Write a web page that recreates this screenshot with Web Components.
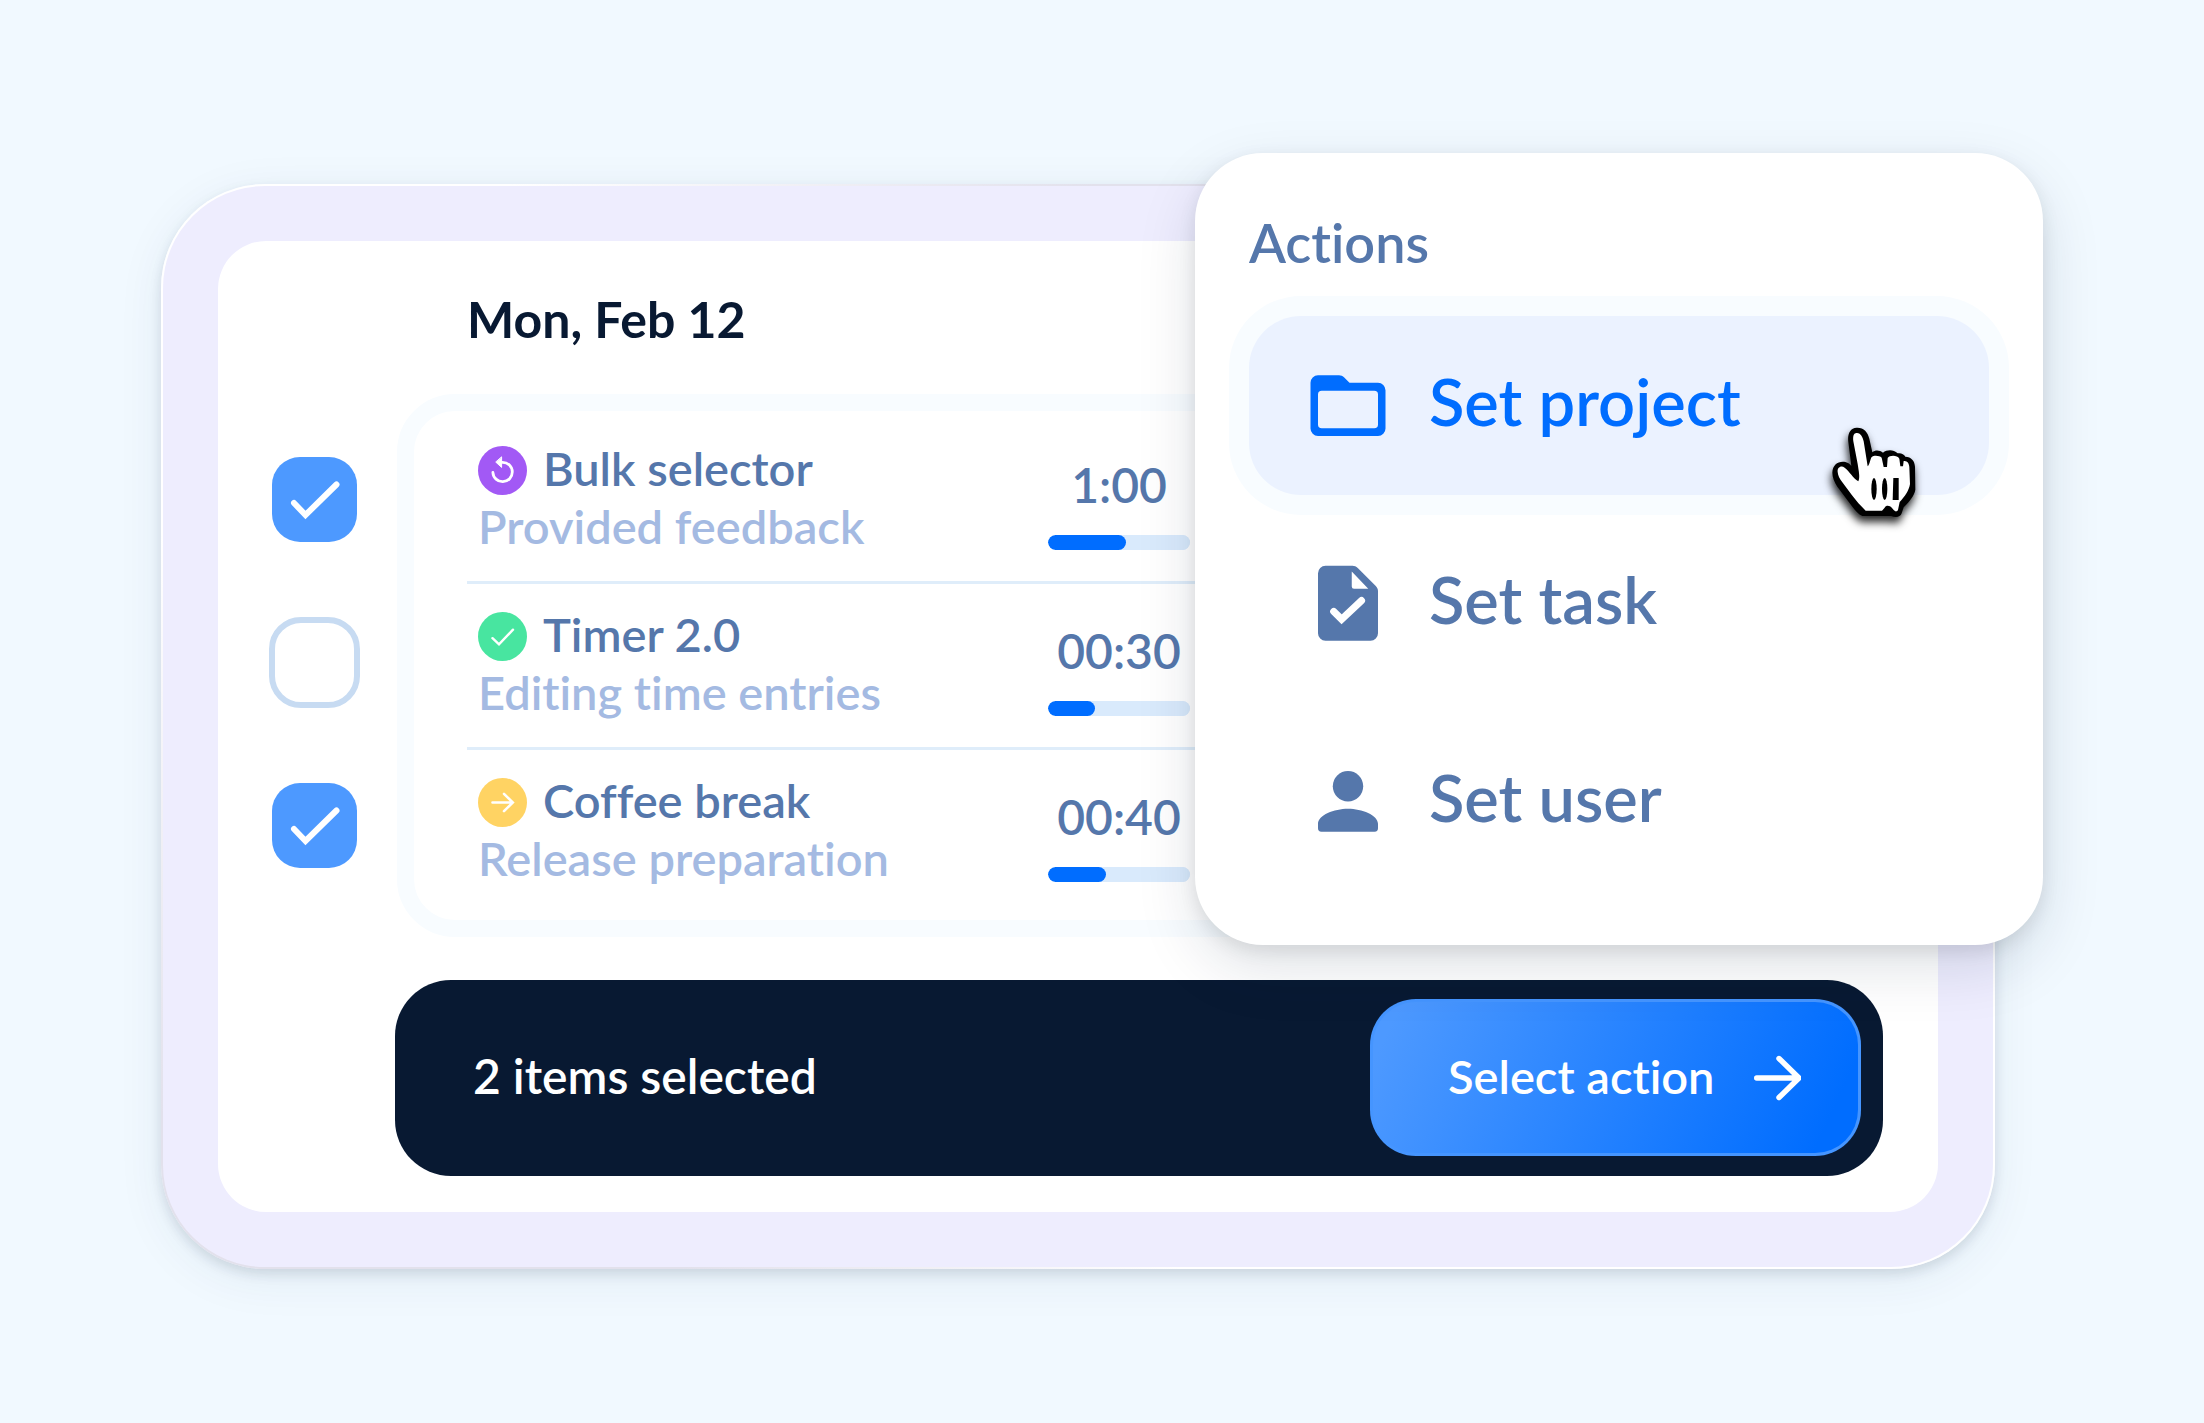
<!DOCTYPE html>
<html lang="en">
<head>
<meta charset="utf-8">
<meta name="viewport" content="width=device-width, initial-scale=1">
<title>Bulk selector</title>
<style>
  html, body { margin: 0; }
  body {
    background: #f1f9ff;
    color: #5577ab;
    font-family: Lato, "Open Sans", sans-serif;
    font-weight: 600;
    font-variant-ligatures: none;
    --primary: #006dff;
    --primary-soft: #4d99ff;
    --ink: #081932;
    --muted: #a4bae2;
    --ring: #f8fcff;
    --track: #d9eafc;
  }
</style>
</head>
<body>
<bulk-stage>
  <time-panel day="Mon, Feb 12">
    <select-box slot="checks" label="Bulk selector" checked></select-box>
    <select-box slot="checks" label="Timer 2.0"></select-box>
    <select-box slot="checks" label="Coffee break" checked></select-box>
    <time-entry icon="undo" name="Bulk selector" note="Provided feedback" time="1:00" value="55"></time-entry>
    <time-entry icon="done" name="Timer 2.0" note="Editing time entries" time="00:30" value="33"></time-entry>
    <time-entry icon="next" name="Coffee break" note="Release preparation" time="00:40" value="41"></time-entry>
    <selection-bar slot="bar">2 items selected</selection-bar>
  </time-panel>
  <action-menu slot="menu" heading="Actions">
    <action-item icon="folder" active>Set project</action-item>
    <action-item icon="task">Set task</action-item>
    <action-item icon="user">Set user</action-item>
    <hand-cursor slot="cursor"></hand-cursor>
  </action-menu>
</bulk-stage>

<script>
const define = (name, render) => customElements.define(name, class extends HTMLElement {
  connectedCallback() {
    if (this.shadowRoot) return;
    const attr = key => this.getAttribute(key) || '';
    this.attachShadow({ mode: 'open' }).innerHTML = render(attr, this);
  }
});

/* Page backdrop with the lavender device frame; the menu floats over its corner. */
define('bulk-stage', () => `
  <style>
    :host { display: block; box-sizing: border-box; min-height: 100vh; padding: 184px 209px 154px 161px; }
    .frame {
      position: relative;
      padding: 55px;
      border: 2px solid transparent;
      border-radius: 104px;
      background:
        linear-gradient(#eeedfe, #eeedfe) padding-box,
        linear-gradient(135deg, #fff 12%, #e2e1ec 32%, #e2e1ec 55%, #fff 72%) border-box;
      box-shadow: 0 5px 12px rgba(20, 40, 60, .13), 0 10px 48px rgba(20, 60, 100, .07);
    }
    ::slotted([slot=menu]) { position: absolute; top: -33px; right: -50px; }
  </style>
  <div class="frame"><slot></slot><slot name="menu"></slot></div>`);

define('time-panel', attr => `
  <style>
    :host { display: block; background: #fff; border-radius: 48px; }
    .panel { display: grid; grid-template-columns: 92px 1fr; column-gap: 35px; padding: 46px 55px 36px 50px; }
    h1 { grid-column: 2; margin: 0 0 43px; padding-left: 72px; color: var(--ink); font-size: 50px; line-height: 64px; font-weight: 700; }
    .checks { display: flex; flex-direction: column; align-items: center; gap: 75px; padding-top: 63px; }
    ul { list-style: none; margin: 0 2px; padding: 7px 0 7px 53px; border: 17px solid var(--ring); border-radius: 58px; }
    .bar { grid-column: 2; margin-top: 43px; }
  </style>
  <section class="panel">
    <h1>${attr('day')}</h1>
    <div class="checks"><slot name="checks"></slot></div>
    <ul role="list"><slot></slot></ul>
    <div class="bar"><slot name="bar"></slot></div>
  </section>`);

define('select-box', (attr, el) => `
  <style>
    :host { display: block; }
    label { display: grid; place-items: center; cursor: pointer; }
    input, svg { grid-area: 1 / 1; }
    input { appearance: none; box-sizing: border-box; width: 91px; height: 91px; margin: 0; border: 6px solid #c7dbf2; border-radius: 32px; background: #fff; }
    input:checked { width: 85px; height: 85px; border: 0; border-radius: 28px; background: var(--primary-soft); }
    svg { width: 85px; height: 85px; pointer-events: none; fill: none; stroke: #fff; stroke-width: 6; stroke-linecap: round; visibility: hidden; }
    input:checked + svg { visibility: visible; }
  </style>
  <label>
    <input type="checkbox" aria-label="${attr('label')}" ${el.hasAttribute('checked') ? 'checked' : ''}>
    <svg viewBox="0 0 85 85" aria-hidden="true"><path d="M22 46 33.500 58 64.500 27.500"/></svg>
  </label>`);

const badges = {
  undo: ['#a259f5', '<path d="M14.9 26.5a9.7 9.7 0 1 0 9.7-10.2h-3"/><path d="M23.6 11.2v10.2l-5.6-5.1z" fill="#fff" stroke-width="1"/>'],
  done: ['#48e5a0', '<path d="M14.5 26.2 21 32.4 35 17.7" stroke-width="2.4"/>'],
  next: ['#ffd363', '<path d="M14.5 24.5h20M26 15.8l8.8 8.7-8.8 8.7" stroke-width="2.6"/>']
};

define('time-entry', attr => {
  const [color, shape] = badges[attr('icon')];
  return `
  <style>
    :host { display: block; border-bottom: 3px solid #dfedfa; }
    :host(:nth-of-type(3)) { border-bottom: 0; }
    .row { display: flex; align-items: center; height: 163px; padding-left: 11px; }
    .text { flex: 0 0 570px; font-size: 47px; line-height: 52px; padding-bottom: 6px; }
    .name { display: flex; align-items: center; gap: 16px; }
    .name span { padding-bottom: 6px; }
    .note { color: var(--muted); }
    svg { width: 49px; height: 49px; fill: none; stroke: #fff; stroke-width: 2.8; stroke-linecap: round; }
    .time { width: 142px; text-align: center; font-size: 48px; line-height: 72px; }
    progress { appearance: none; display: block; width: 100%; height: 15px; margin-top: 14px; border: 0; border-radius: 8px; background: var(--track); overflow: hidden; }
    progress::-webkit-progress-bar { background: var(--track); border-radius: 8px; }
    progress::-webkit-progress-value { background: var(--primary); border-radius: 8px; }
  </style>
  <div class="row" role="listitem">
    <div class="text">
      <div class="name">
        <svg viewBox="0 0 49 49" aria-hidden="true"><circle cx="24.5" cy="24.5" r="24.5" fill="${color}" stroke="none"/>${shape}</svg>
        <span>${attr('name')}</span>
      </div>
      <div class="note">${attr('note')}</div>
    </div>
    <div class="time">
      <span>${attr('time')}</span>
      <progress max="100" value="${attr('value')}" aria-label="${attr('name')}"></progress>
    </div>
  </div>`;
});

define('selection-bar', () => `
  <style>
    :host { display: flex; align-items: center; justify-content: space-between; padding: 19px 22px 20px 78px; border-radius: 56px; background: var(--ink); color: #fff; font-size: 48px; line-height: 56px; }
    span { padding-bottom: 4px; }
    button {
      display: flex; align-items: center; justify-content: space-between; box-sizing: border-box; width: 491px; height: 157px; padding: 0 57px 0 75px;
      border: 3px solid transparent; border-radius: 46px; color: inherit; font: inherit; font-size: 47px; line-height: 56px; cursor: pointer;
      background:
        linear-gradient(115deg, #4d99ff 5%, #006dff 92%) padding-box,
        linear-gradient(#4595ff, #4595ff) border-box;
    }
    svg { width: 50px; height: 50px; fill: none; stroke: #fff; stroke-width: 5.4; stroke-linecap: round; stroke-linejoin: round; }
  </style>
  <span><slot></slot></span>
  <button type="button"><span>Select action</span>
    <svg viewBox="0 0 50 50" aria-hidden="true"><path d="M5.7 25H48M28 5.500l20 19.500-20 19.500"/></svg>
  </button>`);

define('action-menu', attr => `
  <style>
    :host { display: block; box-sizing: border-box; width: 848px; padding: 54px 54px 54px; border-radius: 68px; background: #fff;
      box-shadow: 0 6px 18px rgba(0, 0, 0, .09), 0 22px 60px rgba(10, 30, 60, .13); }
    h2 { margin: 0 0 37px; font-size: 54px; line-height: 72px; font-weight: 600; }
    .items { display: flex; flex-direction: column; gap: 19px; }
    ::slotted([slot=cursor]) { position: absolute; left: 628px; top: 266px; }
  </style>
  <h2>${attr('heading')}</h2>
  <div class="items"><slot></slot></div>
  <slot name="cursor"></slot>`);

const glyphs = {
  folder: '<path fill-rule="evenodd" d="M4 3.800h5.600c.5 0 1 .2 1.400.6L12.400 5.800H20a2 2 0 0 1 2 2v10.200a2 2 0 0 1-2 2H4a2 2 0 0 1-2-2V5.800a2 2 0 0 1 2-2zm1 4.100a1 1 0 0 0-1 1v8a1 1 0 0 0 1 1h14a1 1 0 0 0 1-1v-8a1 1 0 0 0-1-1z"/>',
  task: '<path fill-rule="evenodd" d="M6 1.800h7.200c.5 0 1 .2 1.400.6l4.800 4.800c.4.4.6.9.6 1.400V19.800a2 2 0 0 1-2 2H6a2 2 0 0 1-2-2V3.800a2 2 0 0 1 2-2zm7 1.500V7.300a.6.6 0 0 0 .6.6h3.800z"/><path d="M8.200 14l2.100 2.100 5.300-5" fill="none" stroke="#fff" stroke-width="1.900" stroke-linecap="round"/>',
  user: '<circle cx="12" cy="7.800" r="4.050"/><path d="M12 13.800c3.700 0 8 1.700 8 4v1.200a.9.9 0 0 1-.9.9H4.900a.9.9 0 0 1-.9-.9V17.800c0-2.300 4.300-4 8-4z"/>'
};

define('action-item', attr => `
  <style>
    :host { display: block; }
    button { display: flex; align-items: center; gap: 36px; width: 100%; height: 179px; padding: 0 54px; border: 0; border-radius: 52px;
      background: none; color: inherit; font: inherit; font-size: 65px; line-height: 72px; text-align: left; cursor: pointer; }
    :host([active]) button { background: #ebf2ff; color: var(--primary); box-shadow: 0 0 0 20px var(--ring); }
    svg { flex: none; width: 90px; height: 90px; fill: currentColor; }
    span { padding-bottom: 10px; }
  </style>
  <button type="button"><svg viewBox="0 0 24 24" aria-hidden="true">${glyphs[attr('icon')]}</svg><span><slot></slot></span></button>`);

define('hand-cursor', () => `
  <style>
    :host { display: block; pointer-events: none; }
    svg { display: block; width: 110px; height: 110px; filter: drop-shadow(-1px 6px 4px rgba(0, 0, 0, .85)); }
  </style>
  <svg viewBox="70 55 330 330" aria-hidden="true">
    <path d="M98 216C98 192 117 180 137 184C146 186 151 191 155 196L146 124C143 102 150 82 171 81C192 80 204 94 209 114L218 155C226 148 240 148 250 156C262 147 281 146 294 158C303 156 313 160 317 168C335 168 345 181 346 198L347 267C344 284 331 301 312 320L306 338C302 350 288 352 274 346L188 346C176 340 168 331 158 318L113 258C104 244 98 230 98 216z" fill="#000"/>
    <path d="M114 214C112 201 124 193 135 201C150 212 160 233 176 242C182 231 177 211 174 190L161 122C159 104 163 96 172 97C184 98 189 109 192 122L204 197C211 191 211 176 216 169C223 163 240 165 246 171L252 199H262L264 172C270 163 293 163 299 174L302 197H310L312 181C322 179 329 188 329 200L331 250C328 270 315 288 300 304L295 328C289 337 283 330 277 322C270 313 259 313 255 321L247 330H198C182 315 170 301 157 284L128 245C119 233 115 225 114 214z" fill="#fff"/>
    <ellipse cx="223" cy="265" rx="8" ry="33"/><ellipse cx="255" cy="265" rx="8" ry="33"/><path d="M281 232h16v66h-18z"/>
  </svg>`);
</script>
</body>
</html>
